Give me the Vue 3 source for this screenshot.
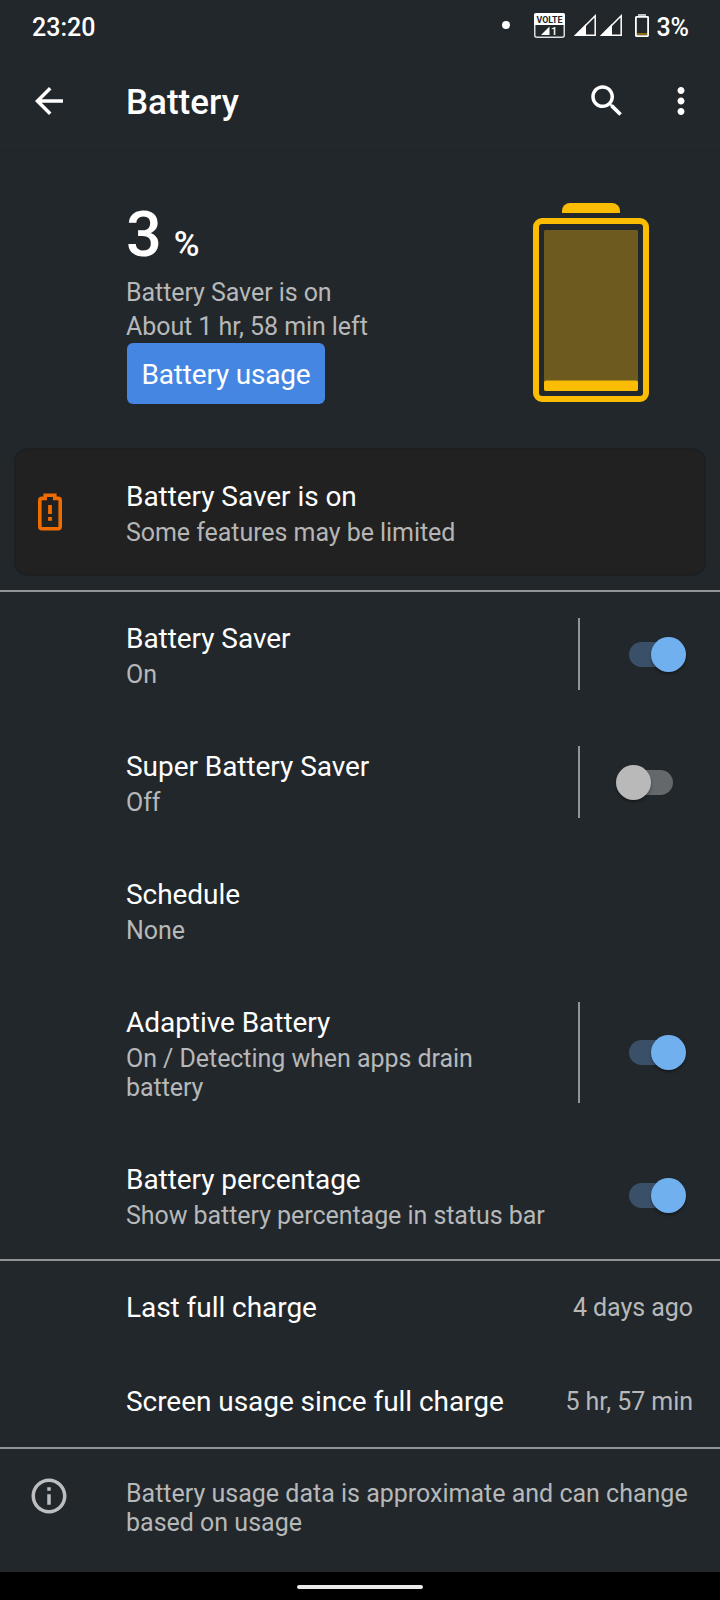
<template>
  <div class="screen">
    <div class="status-bar">
      <span class="clock">23:20</span>
      <div class="status-icons">
        <span class="notification-dot"></span>
        <svg class="volte" viewBox="0 0 31 25" width="31" height="25">
          <rect x="0.75" y="0.75" width="29.5" height="23.5" rx="2" fill="none" stroke="#dcddde" stroke-width="1.5" />
          <path d="M2 0h27a2 2 0 0 1 2 2v10H0V2a2 2 0 0 1 2-2z" fill="#fff" />
          <text x="15.5" y="10" text-anchor="middle" textLength="26" lengthAdjust="spacingAndGlyphs" class="volte-label">VOLTE</text>
          <path d="M7 22h8.5v-8.5z" fill="#fff" />
          <text x="17" y="22" class="volte-sim">1</text>
        </svg>
        <svg v-for="sim in 2" :key="sim" class="signal" viewBox="0 0 22 22" width="22" height="22">
          <path d="M1.8 21.2H21.2V1.8z" fill="none" stroke="#fff" stroke-width="1.5" />
          <path d="M0 22h12V10z" fill="#fff" />
        </svg>
        <svg class="status-battery" viewBox="0 0 14 23" width="14" height="23">
          <rect x="3" y="0" width="8" height="2" fill="#bdbfc0" />
          <rect x="0.9" y="2.9" width="12.2" height="19.2" rx="0.5" fill="none" stroke="#fff" stroke-width="1.8" />
          <rect x="2" y="19" width="10" height="2" fill="#8a6a10" />
        </svg>
        <span class="status-percent">3%</span>
      </div>
    </div>

    <header class="toolbar">
      <button class="icon-btn" aria-label="Back">
        <svg viewBox="0 0 24 24" width="42" height="42">
          <path d="M20 11H7.83l5.59-5.59L12 4l-8 8 8 8 1.41-1.41L7.83 13H20v-2z" fill="#fff" />
        </svg>
      </button>
      <h1 class="toolbar-title">Battery</h1>
      <button class="icon-btn" aria-label="Search">
        <svg viewBox="0 0 24 24" width="42" height="42">
          <path d="M15.5 14h-.79l-.28-.27C15.41 12.59 16 11.11 16 9.5 16 5.91 13.09 3 9.5 3S3 5.91 3 9.5 5.91 16 9.5 16c1.61 0 3.09-.59 4.23-1.57l.27.28v.79l5 4.99L20.49 19l-4.99-5zm-6 0C7.01 14 5 11.99 5 9.5S7.01 5 9.5 5 14 7.01 14 9.5 11.99 14 9.5 14z" fill="#fff" />
        </svg>
      </button>
      <button class="icon-btn more-btn" aria-label="More options">
        <svg viewBox="0 0 24 24" width="42" height="42">
          <path d="M12 8c1.1 0 2-.9 2-2s-.9-2-2-2-2 .9-2 2 .9 2 2 2zm0 2c-1.1 0-2 .9-2 2s.9 2 2 2 2-.9 2-2-.9-2-2-2zm0 6c-1.1 0-2 .9-2 2s.9 2 2 2 2-.9 2-2-.9-2-2-2z" fill="#fff" />
        </svg>
      </button>
    </header>

    <section class="overview">
      <div class="overview-text">
        <div class="level">
          <span class="level-number">3</span>
          <span class="level-unit">%</span>
        </div>
        <p class="overview-line">Battery Saver is on</p>
        <p class="overview-line">About 1 hr, 58 min left</p>
        <button class="usage-btn">Battery usage</button>
      </div>
      <svg class="battery-meter" viewBox="0 0 116 199" width="116" height="199">
        <path d="M29 10V8a8 8 0 0 1 8-8h42a8 8 0 0 1 8 8v2z" fill="#fbbc04" />
        <rect x="3" y="18" width="110" height="178" rx="6" fill="none" stroke="#fbbc04" stroke-width="6" />
        <rect x="11" y="27" width="94" height="161" rx="1.5" fill="#6d5a1e" />
        <rect x="11" y="177.5" width="94" height="10.5" rx="2" fill="#fbbc04" />
      </svg>
    </section>

    <section class="tip-card">
      <svg class="tip-icon" viewBox="0 0 24 38" width="24" height="38">
        <path d="M7.2 2.2h9.6v3.2H20a2.2 2.2 0 0 1 2.2 2.2v26a2.2 2.2 0 0 1-2.2 2.2H4a2.2 2.2 0 0 1-2.2-2.2v-26A2.2 2.2 0 0 1 4 5.4h3.2z" fill="none" stroke="#ef6c00" stroke-width="3.6" />
        <rect x="10.1" y="12" width="3.8" height="9" fill="#ef6c00" />
        <rect x="10.1" y="24" width="3.8" height="3.8" fill="#ef6c00" />
      </svg>
      <div class="row-text">
        <div class="row-title">Battery Saver is on</div>
        <div class="row-summary">Some features may be limited</div>
      </div>
    </section>

    <section class="group">
      <div v-for="item in settings" :key="item.title" class="row">
        <div class="row-text">
          <div class="row-title">{{ item.title }}</div>
          <div class="row-summary">{{ item.summary }}</div>
        </div>
        <div v-if="item.split" class="row-separator"></div>
        <button
          v-if="item.enabled !== undefined"
          :class="['switch', { on: item.enabled }]"
          role="switch"
          :aria-checked="item.enabled"
          @click="item.enabled = !item.enabled"
        >
          <span class="thumb"></span>
        </button>
      </div>
    </section>

    <section class="group">
      <div v-for="stat in stats" :key="stat.label" class="stat-row">
        <span class="stat-label">{{ stat.label }}</span>
        <span class="stat-value">{{ stat.value }}</span>
      </div>
    </section>

    <section class="group footer">
      <svg class="info-icon" viewBox="0 0 24 24" width="42" height="42">
        <path d="M11 7h2v2h-2zm0 4h2v6h-2zm1-9C6.48 2 2 6.48 2 12s4.48 10 10 10 10-4.48 10-10S17.52 2 12 2zm0 18c-4.41 0-8-3.59-8-8s3.59-8 8-8 8 3.59 8 8-3.59 8-8 8z" fill="#bdbebf" />
      </svg>
      <p class="footer-text">Battery usage data is approximate and can change based on usage</p>
    </section>

    <div class="nav-bar">
      <div class="nav-handle"></div>
    </div>
  </div>
</template>

<script setup>
import { reactive } from 'vue';

const settings = reactive([
  { title: 'Battery Saver', summary: 'On', split: true, enabled: true },
  { title: 'Super Battery Saver', summary: 'Off', split: true, enabled: false },
  { title: 'Schedule', summary: 'None' },
  {
    title: 'Adaptive Battery',
    summary: 'On / Detecting when apps drain battery',
    split: true,
    enabled: true
  },
  { title: 'Battery percentage', summary: 'Show battery percentage in status bar', enabled: true }
]);

const stats = [
  { label: 'Last full charge', value: '4 days ago' },
  { label: 'Screen usage since full charge', value: '5 hr, 57 min' }
];
</script>

<style>
body {
  margin: 0;
  background: #22272b;
}
</style>

<style scoped>
.screen {
  width: 720px;
  height: 1600px;
  display: flex;
  flex-direction: column;
  overflow: hidden;
  background: #22272b;
  color: #fff;
  font-family: Roboto, sans-serif;
  font-size: 28px;
}

button {
  border: none;
  padding: 0;
  background: none;
  color: inherit;
  font: inherit;
  cursor: pointer;
}

p,
h1 {
  margin: 0;
}

.status-bar {
  box-sizing: border-box;
  height: 52px;
  padding: 2px 31px 0 32px;
  display: flex;
  align-items: center;
  justify-content: space-between;
  font-size: 25px;
  font-weight: 500;
}

.clock {
  padding-top: 2px;
  line-height: 30px;
}

.status-icons {
  display: flex;
  align-items: center;
}

.notification-dot {
  width: 8px;
  height: 8px;
  margin: 0 24px 4px 0;
  border-radius: 50%;
  background: #fff;
}

.volte {
  margin: 0 9px 3px 0;
}

.volte-label {
  font-size: 9.5px;
  font-weight: 700;
  fill: #22272b;
}

.volte-sim {
  font-size: 11px;
  font-weight: 500;
  fill: #fff;
}

.signal {
  margin: 0 4px 4px 0;
}

.status-battery {
  margin: 0 7px 3px 9px;
}

.status-percent {
  padding-top: 2px;
  line-height: 30px;
}

.toolbar {
  box-sizing: border-box;
  height: 99px;
  padding: 0 18px 0 28px;
  display: flex;
  align-items: center;
  border-bottom: 1px solid #1f2428;
}

.icon-btn {
  width: 42px;
  height: 42px;
}

.icon-btn svg {
  display: block;
}

.more-btn {
  margin-left: 32px;
}

.toolbar-title {
  flex: 1;
  margin-left: 56px;
  padding-top: 4px;
  font-size: 35px;
  font-weight: 500;
  line-height: 42px;
}

.overview {
  box-sizing: border-box;
  height: 297px;
  padding: 52px 71px 0 126px;
  display: flex;
  justify-content: space-between;
  align-items: flex-start;
}

.level {
  height: 73px;
  display: flex;
  align-items: baseline;
  font-weight: 500;
  line-height: 64px;
}

.level-number {
  font-size: 63px;
}

.level-unit {
  margin-left: 12px;
  font-size: 35px;
}

.overview-line {
  color: #b6b8b9;
  font-size: 25px;
  letter-spacing: -0.07px;
  line-height: 34px;
}

.usage-btn {
  display: block;
  width: 198px;
  height: 61px;
  margin: -1px 0 0 1px;
  border-radius: 6px;
  background: #4486e2;
  font-size: 28px;
  letter-spacing: -0.2px;
  line-height: 63px;
  text-align: center;
}

.tip-card {
  box-sizing: border-box;
  height: 128px;
  margin: 0 14px 14px;
  padding: 26px 26px 26px 22px;
  display: flex;
  align-items: center;
  border: 2px solid #1d1f20;
  border-radius: 14px;
  background: #212121;
}

.tip-icon {
  margin-right: 64px;
}

.row-text {
  box-sizing: border-box;
  min-height: 72px;
  padding: 4px 0 1px;
}

.row-title,
.stat-label {
  letter-spacing: -0.05px;
}

.row-title {
  margin-bottom: 5px;
  line-height: 33px;
}

.row-summary {
  color: #b6b8b9;
  font-size: 25px;
  letter-spacing: -0.055px;
  line-height: 29px;
}

.tip-card .row-summary {
  color: #b5b5b5;
}

/* the line sits inside the first row, so groups keep their row heights */
.group {
  box-shadow: inset 0 2px 0 #929598;
}

.row {
  padding: 28px 34px 28px 126px;
  display: flex;
  align-items: center;
}

.row .row-text {
  flex: 1;
}

.row-separator {
  align-self: stretch;
  width: 2px;
  margin: 0 49px 0 56px;
  background: #929598;
}

.switch {
  position: relative;
  flex: none;
  width: 44px;
  height: 25px;
  margin-right: 13px;
  border-radius: 13px;
  background: #64686b;
}

.switch.on {
  background: #3a5068;
}

.thumb {
  position: absolute;
  top: -5px;
  left: -13px;
  width: 35px;
  height: 35px;
  border-radius: 50%;
  background: #b9b9b9;
  box-shadow: 0 2px 3px rgba(0, 0, 0, 0.35);
}

.switch.on .thumb {
  left: 22px;
  background: #70b0ef;
}

.stat-row {
  box-sizing: border-box;
  height: 94px;
  padding: 2px 27px 0 126px;
  display: flex;
  align-items: center;
  justify-content: space-between;
}

.stat-value {
  color: #b6b8b9;
  font-size: 25px;
  letter-spacing: -0.05px;
}

.footer {
  flex: 1;
  padding: 28px 28px 0;
  display: flex;
  align-items: flex-start;
}

.info-icon {
  flex: none;
  margin-right: 56px;
}

.footer-text {
  padding-top: 4px;
  color: #b6b8b9;
  font-size: 25px;
  line-height: 29px;
}

.nav-bar {
  height: 28px;
  display: flex;
  align-items: center;
  justify-content: center;
  background: #000;
}

.nav-handle {
  width: 126px;
  height: 4px;
  margin-top: 2px;
  border-radius: 2px;
  background: #ece9ea;
}
</style>
